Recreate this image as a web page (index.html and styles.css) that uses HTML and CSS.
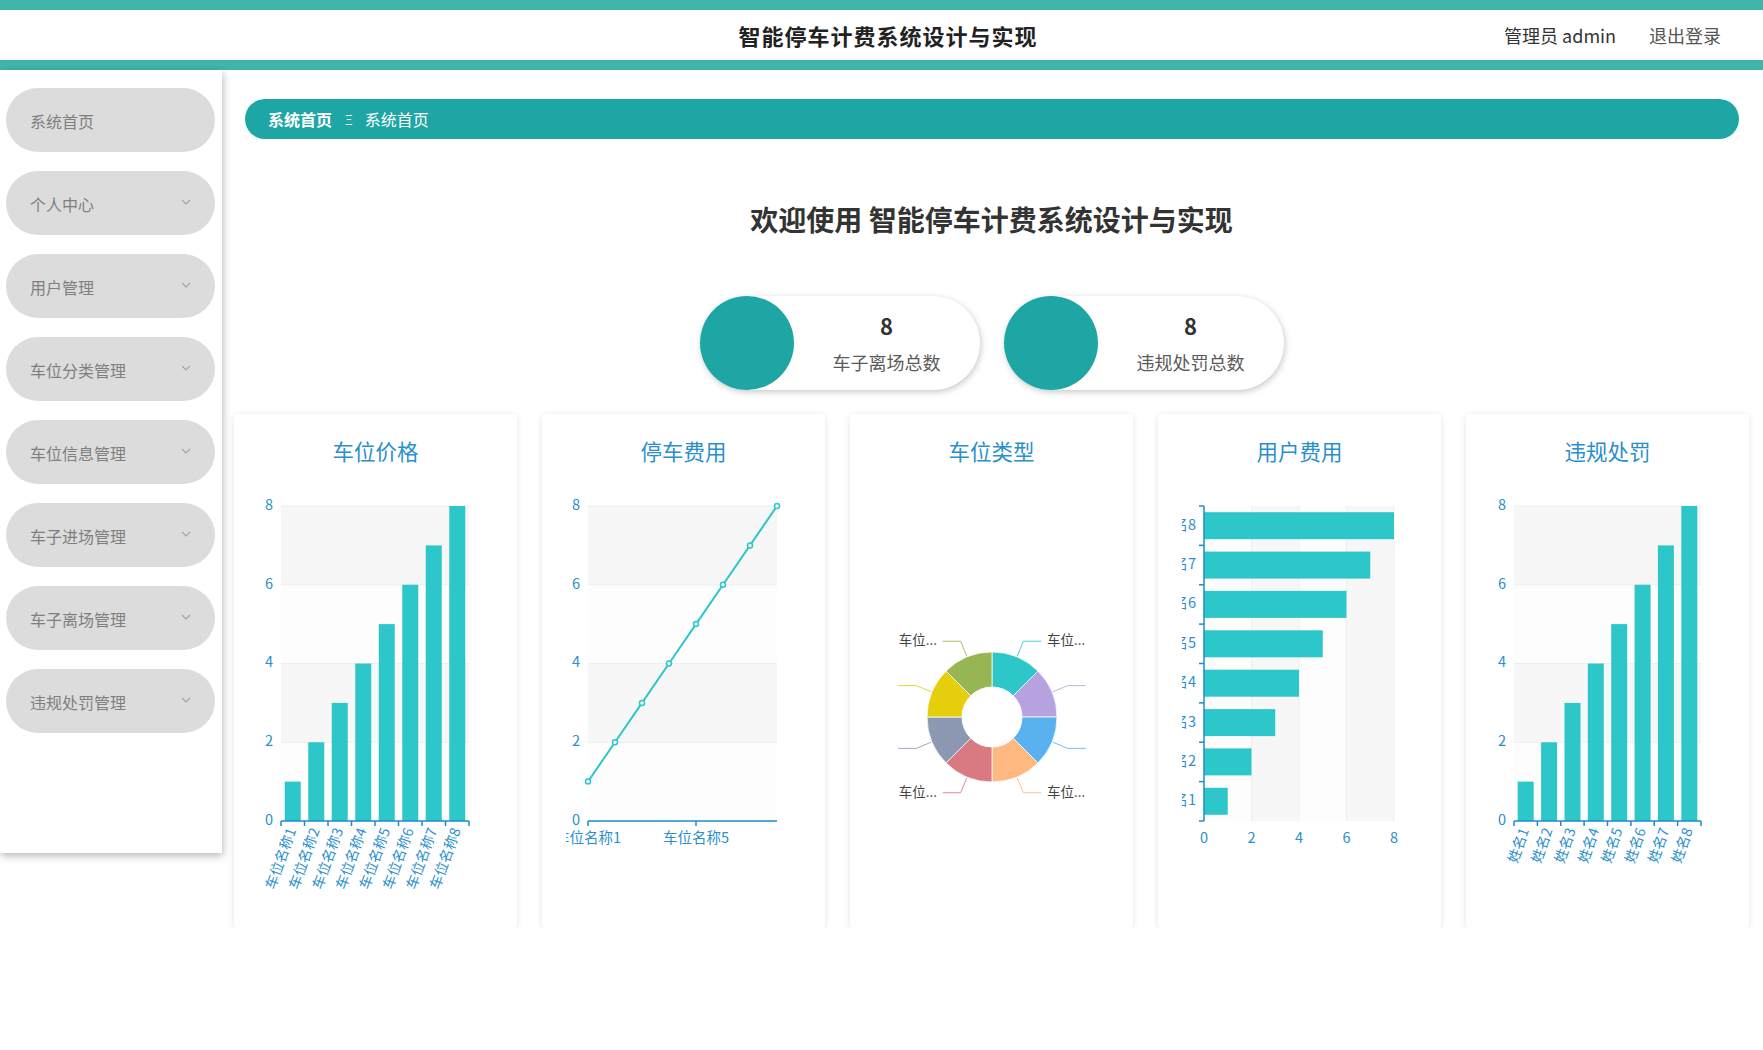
FILE: index.html
```html
<!DOCTYPE html>
<html lang="zh-CN">
<head>
<meta charset="utf-8">
<title>智能停车计费系统设计与实现</title>
<link rel="stylesheet" href="styles.css">
</head>
<body>
<header class="topbar">
  <div class="brand">智能停车计费系统设计与实现</div>
  <div class="user-area">
    <span class="user-name">管理员 admin</span>
    <span class="logout">退出登录</span>
  </div>
</header>

<div class="layout">
  <aside class="sidebar">
    <nav class="menu">
      <div class="menu-item"><span>系统首页</span></div>
      <div class="menu-item"><span>个人中心</span><svg class="chev" viewBox="0 0 10 6"><polyline points="1,1 5,5 9,1"/></svg></div>
      <div class="menu-item"><span>用户管理</span><svg class="chev" viewBox="0 0 10 6"><polyline points="1,1 5,5 9,1"/></svg></div>
      <div class="menu-item"><span>车位分类管理</span><svg class="chev" viewBox="0 0 10 6"><polyline points="1,1 5,5 9,1"/></svg></div>
      <div class="menu-item"><span>车位信息管理</span><svg class="chev" viewBox="0 0 10 6"><polyline points="1,1 5,5 9,1"/></svg></div>
      <div class="menu-item"><span>车子进场管理</span><svg class="chev" viewBox="0 0 10 6"><polyline points="1,1 5,5 9,1"/></svg></div>
      <div class="menu-item"><span>车子离场管理</span><svg class="chev" viewBox="0 0 10 6"><polyline points="1,1 5,5 9,1"/></svg></div>
      <div class="menu-item"><span>违规处罚管理</span><svg class="chev" viewBox="0 0 10 6"><polyline points="1,1 5,5 9,1"/></svg></div>
    </nav>
  </aside>

  <main class="main">
    <div class="breadcrumb">
      <span class="crumb-root">系统首页</span>
      <span class="crumb-sep">Ξ</span>
      <span class="crumb-current">系统首页</span>
    </div>

    <h1 class="welcome">欢迎使用 智能停车计费系统设计与实现</h1>

    <div class="stats">
      <div class="stat-card">
        <div class="stat-dot"></div>
        <div class="stat-body">
          <div class="stat-num">8</div>
          <div class="stat-label">车子离场总数</div>
        </div>
      </div>
      <div class="stat-card">
        <div class="stat-dot"></div>
        <div class="stat-body">
          <div class="stat-num">8</div>
          <div class="stat-label">违规处罚总数</div>
        </div>
      </div>
    </div>

    <div class="charts">
      <!-- 车位价格: vertical bars -->
      <section class="chart-card">
        <h3 class="chart-title">车位价格</h3>
        <svg class="chart" viewBox="0 0 235 464" width="235" height="464">
          <g class="area">
            <rect x="23" y="42" width="188" height="78.75" class="band-b"/>
            <rect x="23" y="120.75" width="188" height="78.75" class="band-a"/>
            <rect x="23" y="199.5" width="188" height="78.75" class="band-b"/>
            <rect x="23" y="278.25" width="188" height="78.75" class="band-a"/>
          </g>
          <g class="split">
            <line x1="23" y1="42" x2="211" y2="42"/>
            <line x1="23" y1="120.75" x2="211" y2="120.75"/>
            <line x1="23" y1="199.5" x2="211" y2="199.5"/>
            <line x1="23" y1="278.25" x2="211" y2="278.25"/>
          </g>
          <g class="bars">
            <rect x="26.75" y="317.6" width="16" height="39.4"/>
            <rect x="50.25" y="278.25" width="16" height="78.75"/>
            <rect x="73.75" y="238.9" width="16" height="118.1"/>
            <rect x="97.25" y="199.5" width="16" height="157.5"/>
            <rect x="120.75" y="160.1" width="16" height="196.9"/>
            <rect x="144.25" y="120.75" width="16" height="236.25"/>
            <rect x="167.75" y="81.4" width="16" height="275.6"/>
            <rect x="191.25" y="42" width="16" height="315"/>
          </g>
          <g class="axis">
            <line x1="23" y1="357" x2="211" y2="357"/>
            <line x1="23" y1="357" x2="23" y2="362"/>
            <line x1="46.5" y1="357" x2="46.5" y2="362"/>
            <line x1="70" y1="357" x2="70" y2="362"/>
            <line x1="93.5" y1="357" x2="93.5" y2="362"/>
            <line x1="117" y1="357" x2="117" y2="362"/>
            <line x1="140.5" y1="357" x2="140.5" y2="362"/>
            <line x1="164" y1="357" x2="164" y2="362"/>
            <line x1="187.5" y1="357" x2="187.5" y2="362"/>
            <line x1="211" y1="357" x2="211" y2="362"/>
          </g>
          <g class="ylab">
            <text x="15" y="42">8</text>
            <text x="15" y="120.75">6</text>
            <text x="15" y="199.5">4</text>
            <text x="15" y="278.25">2</text>
            <text x="15" y="357">0</text>
          </g>
          <g class="xlab-rot">
            <text x="34.75" y="365" transform="rotate(-70 34.75 365)">车位名称1</text>
            <text x="58.25" y="365" transform="rotate(-70 58.25 365)">车位名称2</text>
            <text x="81.75" y="365" transform="rotate(-70 81.75 365)">车位名称3</text>
            <text x="105.25" y="365" transform="rotate(-70 105.25 365)">车位名称4</text>
            <text x="128.75" y="365" transform="rotate(-70 128.75 365)">车位名称5</text>
            <text x="152.25" y="365" transform="rotate(-70 152.25 365)">车位名称6</text>
            <text x="175.75" y="365" transform="rotate(-70 175.75 365)">车位名称7</text>
            <text x="199.25" y="365" transform="rotate(-70 199.25 365)">车位名称8</text>
          </g>
        </svg>
      </section>

      <!-- 停车费用: line -->
      <section class="chart-card">
        <h3 class="chart-title">停车费用</h3>
        <svg class="chart" viewBox="0 0 235 464" width="235" height="464">
          <g class="area">
            <rect x="22" y="42" width="189" height="78.75" class="band-b"/>
            <rect x="22" y="120.75" width="189" height="78.75" class="band-a"/>
            <rect x="22" y="199.5" width="189" height="78.75" class="band-b"/>
            <rect x="22" y="278.25" width="189" height="78.75" class="band-a"/>
          </g>
          <g class="split">
            <line x1="22" y1="42" x2="211" y2="42"/>
            <line x1="22" y1="120.75" x2="211" y2="120.75"/>
            <line x1="22" y1="199.5" x2="211" y2="199.5"/>
            <line x1="22" y1="278.25" x2="211" y2="278.25"/>
          </g>
          <g class="axis">
            <line x1="22" y1="357" x2="211" y2="357"/>
            <line x1="22" y1="357" x2="22" y2="362"/>
            <line x1="130" y1="357" x2="130" y2="362"/>
          </g>
          <polyline class="trend" points="22,317.6 49,278.25 76,238.9 103,199.5 130,160.1 157,120.75 184,81.4 211,42"/>
          <g class="marks">
            <circle cx="22" cy="317.6" r="2.5"/>
            <circle cx="49" cy="278.25" r="2.5"/>
            <circle cx="76" cy="238.9" r="2.5"/>
            <circle cx="103" cy="199.5" r="2.5"/>
            <circle cx="130" cy="160.1" r="2.5"/>
            <circle cx="157" cy="120.75" r="2.5"/>
            <circle cx="184" cy="81.4" r="2.5"/>
            <circle cx="211" cy="42" r="2.5"/>
          </g>
          <g class="ylab">
            <text x="14" y="42">8</text>
            <text x="14" y="120.75">6</text>
            <text x="14" y="199.5">4</text>
            <text x="14" y="278.25">2</text>
            <text x="14" y="357">0</text>
          </g>
          <g class="xlab">
            <text x="22" y="375">车位名称1</text>
            <text x="130" y="375">车位名称5</text>
          </g>
        </svg>
      </section>

      <!-- 车位类型: donut -->
      <section class="chart-card">
        <h3 class="chart-title">车位类型</h3>
        <svg class="chart" viewBox="0 0 235 464" width="235" height="464">
          <g class="ring">
            <path fill="#2ec7c9" d="M118 188 A65 65 0 0 1 163.96 207.04 L139.21 231.79 A30 30 0 0 0 118 223 Z"/>
            <path fill="#b6a2de" d="M163.96 207.04 A65 65 0 0 1 183 253 L148 253 A30 30 0 0 0 139.21 231.79 Z"/>
            <path fill="#5ab1ef" d="M183 253 A65 65 0 0 1 163.96 298.96 L139.21 274.21 A30 30 0 0 0 148 253 Z"/>
            <path fill="#ffb980" d="M163.96 298.96 A65 65 0 0 1 118 318 L118 283 A30 30 0 0 0 139.21 274.21 Z"/>
            <path fill="#d87a80" d="M118 318 A65 65 0 0 1 72.04 298.96 L96.79 274.21 A30 30 0 0 0 118 283 Z"/>
            <path fill="#8d98b3" d="M72.04 298.96 A65 65 0 0 1 53 253 L88 253 A30 30 0 0 0 96.79 274.21 Z"/>
            <path fill="#e5cf0d" d="M53 253 A65 65 0 0 1 72.04 207.04 L96.79 231.79 A30 30 0 0 0 88 253 Z"/>
            <path fill="#97b552" d="M72.04 207.04 A65 65 0 0 1 118 188 L118 223 A30 30 0 0 0 96.79 231.79 Z"/>
          </g>
          <g class="leaders">
            <polyline stroke="#2ec7c9" points="143.26,192.02 149.38,177.24 167.38,177.24"/>
            <polyline stroke="#b6a2de" points="178.98,227.74 193.76,221.62 211.76,221.62"/>
            <polyline stroke="#5ab1ef" points="178.98,278.26 193.76,284.38 211.76,284.38"/>
            <polyline stroke="#ffb980" points="143.26,313.98 149.38,328.76 167.38,328.76"/>
            <polyline stroke="#d87a80" points="92.74,313.98 86.62,328.76 68.62,328.76"/>
            <polyline stroke="#8d98b3" points="57.02,278.26 42.24,284.38 24.24,284.38"/>
            <polyline stroke="#e5cf0d" points="57.02,227.74 42.24,221.62 24.24,221.62"/>
            <polyline stroke="#97b552" points="92.74,192.02 86.62,177.24 68.62,177.24"/>
          </g>
          <g class="pie-lab">
            <text x="173" y="177">车位...</text>
            <text x="173" y="329">车位...</text>
            <text x="63" y="329" class="end">车位...</text>
            <text x="63" y="177" class="end">车位...</text>
          </g>
        </svg>
      </section>

      <!-- 用户费用: horizontal bars -->
      <section class="chart-card">
        <h3 class="chart-title">用户费用</h3>
        <svg class="chart" viewBox="0 0 235 464" width="235" height="464">
          <g class="area">
            <rect x="22" y="42" width="47.5" height="315" class="band-a"/>
            <rect x="69.5" y="42" width="47.5" height="315" class="band-b"/>
            <rect x="117" y="42" width="47.5" height="315" class="band-a"/>
            <rect x="164.5" y="42" width="47.5" height="315" class="band-b"/>
          </g>
          <g class="split">
            <line x1="69.5" y1="42" x2="69.5" y2="357"/>
            <line x1="117" y1="42" x2="117" y2="357"/>
            <line x1="164.5" y1="42" x2="164.5" y2="357"/>
            <line x1="212" y1="42" x2="212" y2="357"/>
          </g>
          <g class="bars">
            <rect x="22" y="323.8" width="23.75" height="27"/>
            <rect x="22" y="284.4" width="47.5" height="27"/>
            <rect x="22" y="245.1" width="71.25" height="27"/>
            <rect x="22" y="205.7" width="95" height="27"/>
            <rect x="22" y="166.3" width="118.75" height="27"/>
            <rect x="22" y="126.9" width="142.5" height="27"/>
            <rect x="22" y="87.6" width="166.25" height="27"/>
            <rect x="22" y="48.2" width="190" height="27"/>
          </g>
          <g class="axis">
            <line x1="22" y1="42" x2="22" y2="357"/>
            <line x1="17" y1="42" x2="22" y2="42"/>
            <line x1="17" y1="81.375" x2="22" y2="81.375"/>
            <line x1="17" y1="120.75" x2="22" y2="120.75"/>
            <line x1="17" y1="160.125" x2="22" y2="160.125"/>
            <line x1="17" y1="199.5" x2="22" y2="199.5"/>
            <line x1="17" y1="238.875" x2="22" y2="238.875"/>
            <line x1="17" y1="278.25" x2="22" y2="278.25"/>
            <line x1="17" y1="317.625" x2="22" y2="317.625"/>
            <line x1="17" y1="357" x2="22" y2="357"/>
          </g>
          <g class="ylab">
            <text x="14" y="61.7">姓名8</text>
            <text x="14" y="101.1">姓名7</text>
            <text x="14" y="140.4">姓名6</text>
            <text x="14" y="179.8">姓名5</text>
            <text x="14" y="219.2">姓名4</text>
            <text x="14" y="258.6">姓名3</text>
            <text x="14" y="297.9">姓名2</text>
            <text x="14" y="337.3">姓名1</text>
          </g>
          <g class="xlab">
            <text x="22" y="375">0</text>
            <text x="69.5" y="375">2</text>
            <text x="117" y="375">4</text>
            <text x="164.5" y="375">6</text>
            <text x="212" y="375">8</text>
          </g>
        </svg>
      </section>

      <!-- 违规处罚: vertical bars -->
      <section class="chart-card">
        <h3 class="chart-title">违规处罚</h3>
        <svg class="chart" viewBox="0 0 235 464" width="235" height="464">
          <g class="area">
            <rect x="24" y="42" width="187" height="78.75" class="band-b"/>
            <rect x="24" y="120.75" width="187" height="78.75" class="band-a"/>
            <rect x="24" y="199.5" width="187" height="78.75" class="band-b"/>
            <rect x="24" y="278.25" width="187" height="78.75" class="band-a"/>
          </g>
          <g class="split">
            <line x1="24" y1="42" x2="211" y2="42"/>
            <line x1="24" y1="120.75" x2="211" y2="120.75"/>
            <line x1="24" y1="199.5" x2="211" y2="199.5"/>
            <line x1="24" y1="278.25" x2="211" y2="278.25"/>
          </g>
          <g class="bars">
            <rect x="27.7" y="317.6" width="16" height="39.4"/>
            <rect x="51.1" y="278.25" width="16" height="78.75"/>
            <rect x="74.5" y="238.9" width="16" height="118.1"/>
            <rect x="97.8" y="199.5" width="16" height="157.5"/>
            <rect x="121.2" y="160.1" width="16" height="196.9"/>
            <rect x="144.6" y="120.75" width="16" height="236.25"/>
            <rect x="167.9" y="81.4" width="16" height="275.6"/>
            <rect x="191.3" y="42" width="16" height="315"/>
          </g>
          <g class="axis">
            <line x1="24" y1="357" x2="211" y2="357"/>
            <line x1="24" y1="357" x2="24" y2="362"/>
            <line x1="47.4" y1="357" x2="47.4" y2="362"/>
            <line x1="70.75" y1="357" x2="70.75" y2="362"/>
            <line x1="94.1" y1="357" x2="94.1" y2="362"/>
            <line x1="117.5" y1="357" x2="117.5" y2="362"/>
            <line x1="140.9" y1="357" x2="140.9" y2="362"/>
            <line x1="164.25" y1="357" x2="164.25" y2="362"/>
            <line x1="187.6" y1="357" x2="187.6" y2="362"/>
            <line x1="211" y1="357" x2="211" y2="362"/>
          </g>
          <g class="ylab">
            <text x="16" y="42">8</text>
            <text x="16" y="120.75">6</text>
            <text x="16" y="199.5">4</text>
            <text x="16" y="278.25">2</text>
            <text x="16" y="357">0</text>
          </g>
          <g class="xlab-rot">
            <text x="35.7" y="365" transform="rotate(-70 35.7 365)">姓名1</text>
            <text x="59.1" y="365" transform="rotate(-70 59.1 365)">姓名2</text>
            <text x="82.4" y="365" transform="rotate(-70 82.4 365)">姓名3</text>
            <text x="105.8" y="365" transform="rotate(-70 105.8 365)">姓名4</text>
            <text x="129.2" y="365" transform="rotate(-70 129.2 365)">姓名5</text>
            <text x="152.6" y="365" transform="rotate(-70 152.6 365)">姓名6</text>
            <text x="175.9" y="365" transform="rotate(-70 175.9 365)">姓名7</text>
            <text x="199.3" y="365" transform="rotate(-70 199.3 365)">姓名8</text>
          </g>
        </svg>
      </section>
    </div>
  </main>
</div>
</body>
</html>
```

FILE: styles.css
```css
* {
  box-sizing: border-box;
}

body {
  margin: 0;
  background: #fff;
  font-family: "Noto Sans CJK SC", "Noto Sans", "Liberation Sans", sans-serif;
  color: #333;
}

/* ---------- top bar ---------- */
.topbar {
  height: 70px;
  border-top: 10px solid #41b4ac;
  border-bottom: 10px solid #41b4ac;
  display: grid;
  grid-template-columns: 1fr auto 1fr;
  align-items: center;
  background: #fff;
}

.brand {
  grid-column: 2;
  padding-left: 13px;
  font-size: 22px;
  font-weight: 700;
  letter-spacing: 1px;
  color: #222;
}

.user-area {
  grid-column: 3;
  justify-self: end;
  display: flex;
  gap: 33px;
  padding-right: 42px;
  font-size: 18px;
  color: #333;
}

.logout {
  color: #555;
}

/* ---------- layout ---------- */
.layout {
  display: flex;
  align-items: flex-start;
}

.sidebar {
  width: 222px;
  flex: none;
  height: 783px;
  background: #fff;
  box-shadow: 1px 3px 8px rgba(0, 0, 0, 0.28);
  padding: 18px 7px 0 6px;
  position: relative;
  z-index: 1;
}

.menu {
  display: flex;
  flex-direction: column;
  gap: 19px;
}

.menu-item {
  height: 64px;
  border-radius: 32px;
  background: #dcdcdc;
  display: flex;
  align-items: center;
  justify-content: space-between;
  padding: 2px 24px 0 24px;
  font-size: 16px;
  color: #7f7f7f;
}

.chev {
  width: 10px;
  height: 6px;
  margin-top: -4px;
  fill: none;
  stroke: #a3a3a3;
  stroke-width: 1.1;
}

/* ---------- main ---------- */
.main {
  flex: 1;
  min-width: 0;
  padding: 29px 14px 0 12px;
}

.breadcrumb {
  height: 40px;
  margin: 0 10px 0 11px;
  border-radius: 20px;
  background: #1ea6a4;
  display: flex;
  align-items: center;
  padding-left: 23px;
  font-size: 16px;
  color: #fff;
}

.crumb-root {
  font-weight: 700;
}

.crumb-sep {
  font-size: 13px;
  margin: 0 12px 0 13px;
  color: #e8f6f5;
}

.welcome {
  margin: 60px 0 0;
  text-align: center;
  font-size: 28px;
  line-height: 40px;
  font-weight: 700;
  color: #333;
}

.stats {
  margin-top: 57px;
  display: flex;
  justify-content: center;
  gap: 24px;
}

.stat-card {
  width: 280px;
  height: 94px;
  border-radius: 47px;
  background: #fff;
  box-shadow: 1px 2px 6px rgba(0, 0, 0, 0.22);
  display: flex;
  align-items: stretch;
}

.stat-dot {
  width: 94px;
  height: 94px;
  border-radius: 50%;
  background: #1ea6a4;
  flex: none;
}

.stat-body {
  flex: 1;
  display: flex;
  flex-direction: column;
  align-items: center;
  padding-top: 15px;
}

.stat-num {
  font-size: 22px;
  line-height: 28px;
  font-weight: 700;
  color: #333;
}

.stat-label {
  margin-top: 11px;
  font-size: 18px;
  line-height: 24px;
  color: #5a5a5a;
}

/* ---------- chart cards ---------- */
.charts {
  margin-top: 24px;
  display: grid;
  grid-template-columns: repeat(5, 1fr);
  gap: 25px;
}

.chart-card {
  height: 514px;
  background: #fff;
  border-radius: 4px;
  box-shadow: 0 1px 6px rgba(0, 0, 0, 0.11);
  padding-top: 24px;
}

.chart-title {
  margin: 0;
  text-align: center;
  font-size: 21.5px;
  line-height: 26px;
  font-weight: 400;
  color: #2b8fcc;
}

.chart {
  display: block;
  margin-left: 24px;
  font-family: "Noto Sans CJK SC", "Noto Sans", sans-serif;
}

.band-a {
  fill: #fdfdfd;
}

.band-b {
  fill: #f7f7f7;
}

.split line {
  stroke: #eeeeee;
  stroke-width: 1;
}

.bars rect {
  fill: #2ec7c9;
}

.axis line {
  stroke: #1b8ccb;
  stroke-width: 1.5;
}

.ylab text {
  fill: #2b8fcc;
  font-size: 14.5px;
  text-anchor: end;
  dominant-baseline: middle;
}

.xlab text {
  fill: #2b8fcc;
  font-size: 14.5px;
  text-anchor: middle;
  dominant-baseline: middle;
}

.xlab-rot text {
  fill: #2b8fcc;
  font-size: 14px;
  text-anchor: end;
  dominant-baseline: middle;
}

.trend {
  fill: none;
  stroke: #2ec7c9;
  stroke-width: 2;
}

.marks circle {
  fill: #fff;
  stroke: #2ec7c9;
  stroke-width: 1.5;
}

.ring path {
  stroke: #fff;
  stroke-width: 0.8;
}

.leaders polyline {
  fill: none;
  stroke-width: 1;
  stroke-opacity: 0.85;
}

.pie-lab text {
  fill: #444;
  font-size: 13.5px;
  dominant-baseline: middle;
}

.pie-lab text.end {
  text-anchor: end;
}
```
